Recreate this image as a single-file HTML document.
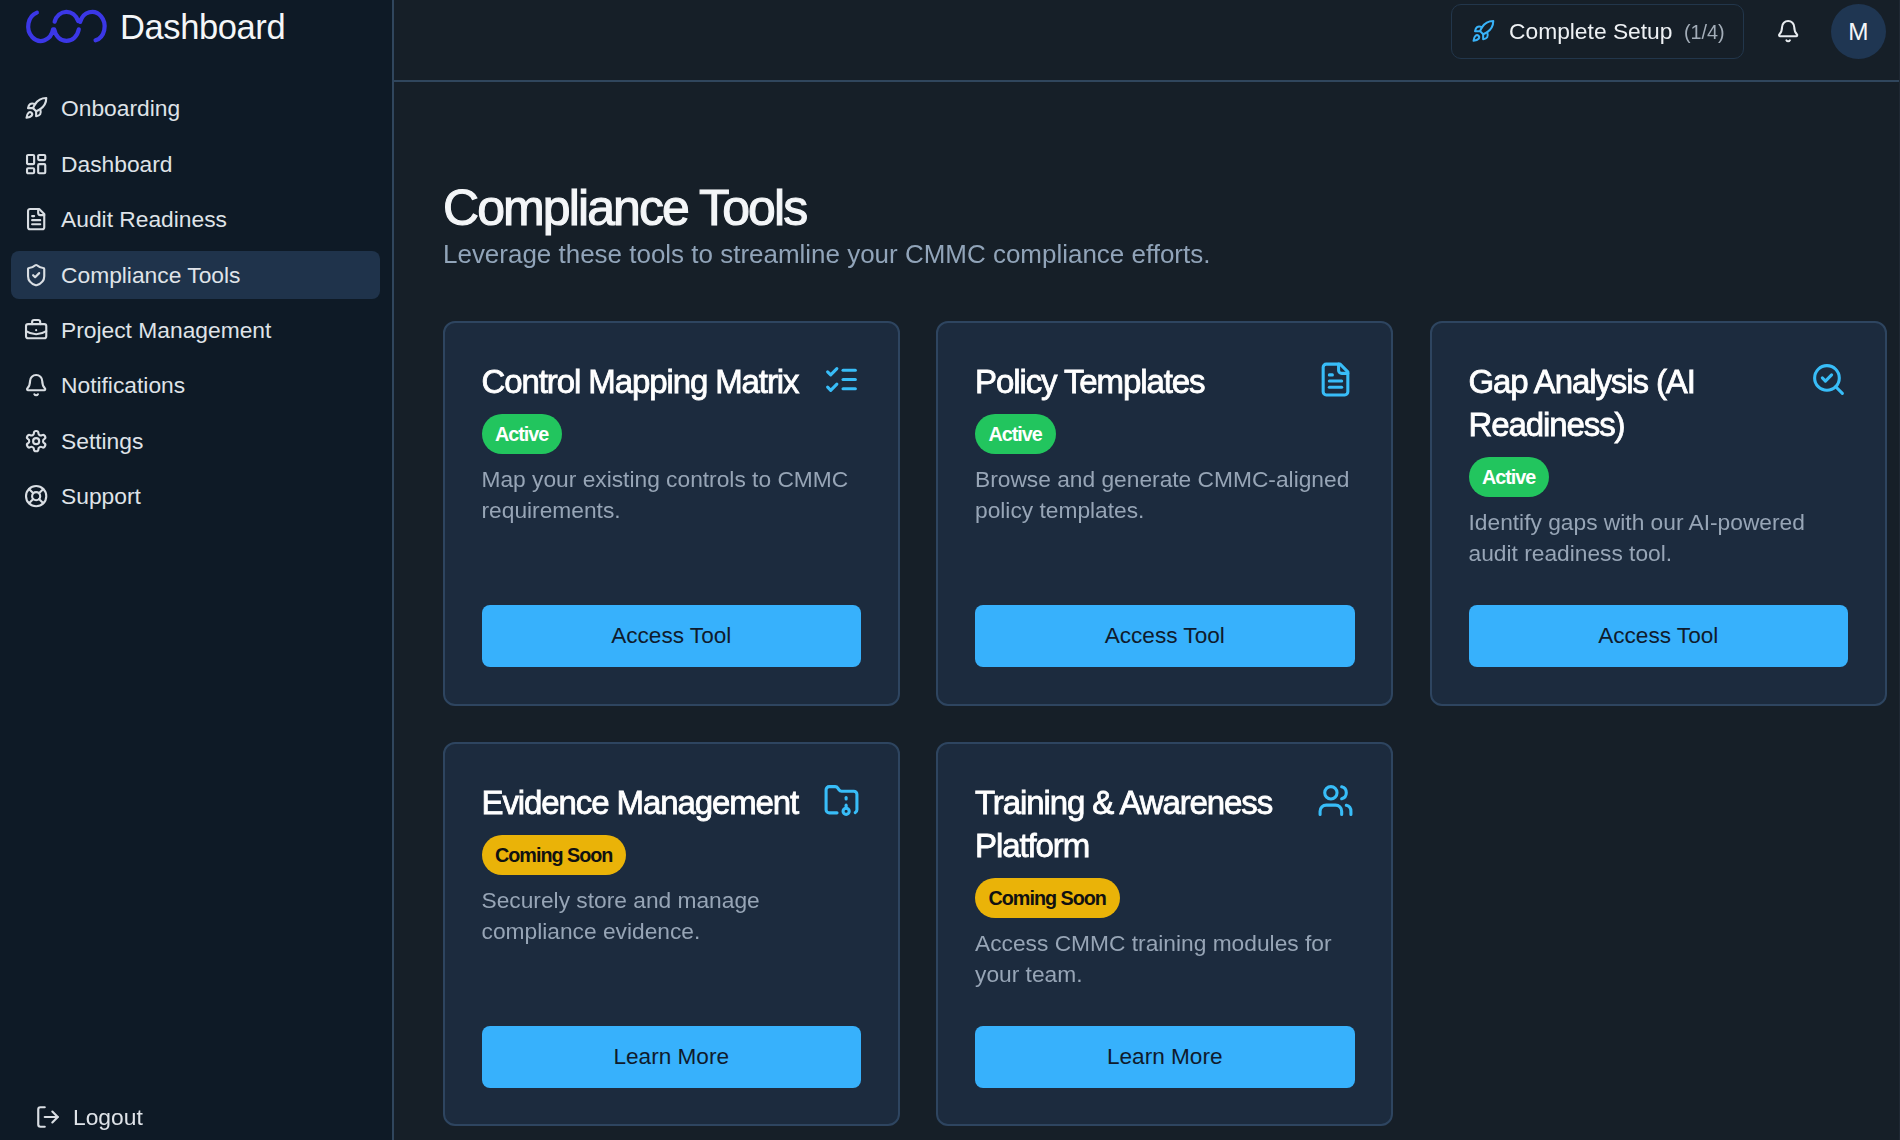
<!DOCTYPE html>
<html><head><meta charset="utf-8">
<style>
*{box-sizing:border-box;margin:0;padding:0}
html,body{width:1900px;height:1140px;overflow:hidden}
body{background:#161f28;font-family:"Liberation Sans",sans-serif;position:relative;color:#fff}
.abs{position:absolute}
#side{left:0;top:0;width:394px;height:1140px;background:#0e1a26;border-right:2px solid #30465d}
#hdr{left:394px;top:0;width:1506px;height:81.5px;border-bottom:2px solid #30465d;background:#161f28}
svg.ic{position:absolute;fill:none;stroke-linecap:round;stroke-linejoin:round}
.nav{position:absolute;left:11px;width:368.5px;height:48.7px;border-radius:8px}
.nav.act{background:#1f334b}
.nav span{position:absolute;left:50px;top:0;line-height:48.7px;font-size:22.8px;color:#dfe3e8;white-space:nowrap}
.nav svg{left:12.6px;top:12.2px;width:24.3px;height:24.3px;stroke:#d9dee3;stroke-width:2.1}
.card{position:absolute;width:457px;height:384.4px;background:#1c2b3e;border:2px solid #2e4560;border-radius:12px}
.card h3{position:absolute;left:37px;top:37px;width:330px;font-size:33px;line-height:43px;font-weight:normal;-webkit-text-stroke:0.8px #fff;letter-spacing:-1.1px;color:#fff}
.card .ico{position:absolute;right:37.2px;top:37.5px;width:37px;height:37px;stroke:#38bdf8;stroke-width:2}
.badge{position:absolute;left:37px;height:40.5px;border-radius:20.25px;font-size:19.76px;font-weight:bold;line-height:40.5px;padding:0 14px 0 13.5px;letter-spacing:-1px;white-space:nowrap}
.badge.g{background:#22c55e;color:#fff}
.badge.y{background:#eab308;color:#111}
.desc{position:absolute;left:37px;width:380px;font-size:22.75px;line-height:31px;color:#97a5b6}
.btn{position:absolute;left:37px;width:379.5px;height:61.5px;top:282px;background:#37b1fc;border-radius:8px;color:#0f1b2d;font-size:22.6px;line-height:61.5px;text-align:center}
</style></head>
<body><div id="wrap" style="position:absolute;left:0;top:0;width:1900px;height:1140px;filter:blur(0.5px)">
<div id="side" class="abs">
  <!-- logo -->
  <svg class="abs" style="left:0;top:0;width:120px;height:50px" viewBox="0 0 120 50" fill="none" stroke="#3b37e6" stroke-width="4.2" stroke-linecap="round">
    <path d="M36.87 12.61A12.55 14.5 0 1 0 53.03 29.41 M54.63 21.68A12.55 14.5 0 0 1 78.14 20.97 M78.78 29.41A12.55 14.5 0 0 1 54.22 29.41 M80.16 21.92A12.55 14.5 0 1 1 95.56 40.34"/>
  </svg>
  <div class="nav" style="top:84.3px"><svg class="ic" viewBox="0 0 24 24"><path d="M4.5 16.5c-1.5 1.26-2 5-2 5s3.74-.5 5-2c.71-.84.7-2.13-.09-2.91a2.18 2.18 0 0 0-2.91-.09z"/><path d="m12 15-3-3a22 22 0 0 1 2-3.95A12.88 12.88 0 0 1 22 2c0 2.720-.78 7.5-6 11a22.350 22.350 0 0 1-4 2z"/><path d="M9 12H4s.55-3.03 2-4c1.62-1.08 5 0 5 0"/><path d="M12 15v5s3.03-.55 4-2c1.08-1.62 0-5 0-5"/></svg><span>Onboarding</span></div>
  <div class="nav" style="top:139.7px"><svg class="ic" viewBox="0 0 24 24"><rect width="7" height="9" x="3" y="3" rx="1"/><rect width="7" height="5" x="14" y="3" rx="1"/><rect width="7" height="9" x="14" y="12" rx="1"/><rect width="7" height="5" x="3" y="16" rx="1"/></svg><span>Dashboard</span></div>
  <div class="nav" style="top:195.1px"><svg class="ic" viewBox="0 0 24 24"><path d="M15 2H6a2 2 0 0 0-2 2v16a2 2 0 0 0 2 2h12a2 2 0 0 0 2-2V7Z"/><path d="M14 2v4a2 2 0 0 0 2 2h4"/><path d="M10 9H8"/><path d="M16 13H8"/><path d="M16 17H8"/></svg><span>Audit Readiness</span></div>
  <div class="nav act" style="top:250.5px"><svg class="ic" viewBox="0 0 24 24"><path d="M20 13c0 5-3.5 7.5-7.66 8.95a1 1 0 0 1-.67-.01C7.5 20.5 4 18 4 13V6a1 1 0 0 1 1-1c2 0 4.5-1.2 6.240-2.720a1.170 1.170 0 0 1 1.520 0C14.510 3.810 17 5 19 5a1 1 0 0 1 1 1z"/><path d="m9 12 2 2 4-4"/></svg><span>Compliance Tools</span></div>
  <div class="nav" style="top:305.9px"><svg class="ic" viewBox="0 0 24 24"><path d="M12 12h.01"/><path d="M16 6V4a2 2 0 0 0-2-2h-4a2 2 0 0 0-2 2v2"/><path d="M22 13a18.150 18.150 0 0 1-20 0"/><rect width="20" height="14" x="2" y="6" rx="2"/></svg><span>Project Management</span></div>
  <div class="nav" style="top:361.3px"><svg class="ic" viewBox="0 0 24 24"><path d="M10.268 21a2 2 0 0 0 3.464 0"/><path d="M3.262 15.326A1 1 0 0 0 4 17h16a1 1 0 0 0 .74-1.673C19.410 13.956 18 12.499 18 8A6 6 0 0 0 6 8c0 4.499-1.411 5.956-2.738 7.326"/></svg><span>Notifications</span></div>
  <div class="nav" style="top:416.7px"><svg class="ic" viewBox="0 0 24 24"><path d="M12.22 2h-.44a2 2 0 0 0-2 2v.18a2 2 0 0 1-1 1.73l-.43.25a2 2 0 0 1-2 0l-.15-.08a2 2 0 0 0-2.73.73l-.22.38a2 2 0 0 0 .73 2.73l.15.1a2 2 0 0 1 1 1.72v.51a2 2 0 0 1-1 1.74l-.15.09a2 2 0 0 0-.73 2.73l.22.38a2 2 0 0 0 2.73.73l.15-.08a2 2 0 0 1 2 0l.43.25a2 2 0 0 1 1 1.73V20a2 2 0 0 0 2 2h.44a2 2 0 0 0 2-2v-.18a2 2 0 0 1 1-1.73l.43-.25a2 2 0 0 1 2 0l.15.08a2 2 0 0 0 2.73-.73l.22-.39a2 2 0 0 0-.73-2.73l-.15-.08a2 2 0 0 1-1-1.74v-.5a2 2 0 0 1 1-1.74l.15-.09a2 2 0 0 0 .73-2.73l-.22-.38a2 2 0 0 0-2.73-.73l-.15.08a2 2 0 0 1-2 0l-.43-.25a2 2 0 0 1-1-1.73V4a2 2 0 0 0-2-2z"/><circle cx="12" cy="12" r="3"/></svg><span>Settings</span></div>
  <div class="nav" style="top:472.1px"><svg class="ic" viewBox="0 0 24 24"><circle cx="12" cy="12" r="10"/><path d="m4.93 4.93 4.24 4.24"/><path d="m14.83 9.17 4.24-4.24"/><path d="m14.83 14.83 4.24 4.24"/><path d="m9.17 14.83-4.24 4.24"/><circle cx="12" cy="12" r="4"/></svg><span>Support</span></div>
  <svg class="ic" style="left:34.5px;top:1103.6px;width:26px;height:26px;stroke:#d9dee3;stroke-width:2" viewBox="0 0 24 24"><path d="M9 21H5a2 2 0 0 1-2-2V5a2 2 0 0 1 2-2h4"/><polyline points="16 17 21 12 16 7"/><line x1="21" x2="9" y1="12" y2="12"/></svg>
  <div class="abs" style="left:73px;top:1093px;line-height:48.7px;font-size:22.8px;color:#dfe3e8">Logout</div>
  <div class="abs" style="left:120px;top:5px;font-size:34.5px;line-height:44px;color:#f4f6f8;letter-spacing:-0.4px">Dashboard</div>
</div>
<div id="hdr" class="abs"></div>
<div class="abs" style="left:1451.3px;top:3.9px;width:292.9px;height:55.3px;border:1.52px solid #22364b;border-radius:10px"></div>
<svg class="ic" style="left:1471px;top:19.4px;width:24.3px;height:24.3px;stroke:#38b2f8;stroke-width:2" viewBox="0 0 24 24"><path d="M4.5 16.5c-1.5 1.26-2 5-2 5s3.74-.5 5-2c.71-.84.7-2.13-.09-2.91a2.18 2.18 0 0 0-2.91-.09z"/><path d="m12 15-3-3a22 22 0 0 1 2-3.95A12.88 12.88 0 0 1 22 2c0 2.720-.78 7.5-6 11a22.350 22.350 0 0 1-4 2z"/><path d="M9 12H4s.55-3.03 2-4c1.62-1.08 5 0 5 0"/><path d="M12 15v5s3.03-.55 4-2c1.08-1.62 0-5 0-5"/></svg>
<div class="abs" style="left:1509px;top:7px;line-height:48px;font-size:22.8px;color:#eef1f4;white-space:nowrap">Complete Setup</div>
<div class="abs" style="left:1684px;top:8px;line-height:48px;font-size:19.8px;color:#a3adb8;white-space:nowrap">(1/4)</div>
<svg class="ic" style="left:1775.5px;top:19.4px;width:24.3px;height:24.3px;stroke:#e8ecf0;stroke-width:2" viewBox="0 0 24 24"><path d="M10.268 21a2 2 0 0 0 3.464 0"/><path d="M3.262 15.326A1 1 0 0 0 4 17h16a1 1 0 0 0 .74-1.673C19.410 13.956 18 12.499 18 8A6 6 0 0 0 6 8c0 4.499-1.411 5.956-2.738 7.326"/></svg>
<div class="abs" style="left:1830.8px;top:3.9px;width:55.3px;height:55.3px;border-radius:50%;background:#1f3652;color:#f4f6f8;font-size:24.3px;line-height:55.3px;text-align:center">M</div>
<div class="abs" style="left:443px;top:177.5px;font-size:50px;line-height:60px;-webkit-text-stroke:1.1px #f4f6f8;color:#f4f6f8;letter-spacing:-1.9px;white-space:nowrap">Compliance Tools</div>
<div class="abs" style="left:443px;top:238.25px;font-size:25.97px;line-height:32px;color:#91a4b9;white-space:nowrap">Leverage these tools to streamline your CMMC compliance efforts.</div>
<div class="card" style="left:442.5px;top:321.3px">
  <h3>Control Mapping Matrix</h3>
  <svg class="ico ic" viewBox="0 0 24 24"><path d="m3 17 2 2 4-4"/><path d="m3 7 2 2 4-4"/><path d="M13 6h8"/><path d="M13 12h8"/><path d="M13 18h8"/></svg>
  <div class="badge g" style="top:90.6px">Active</div>
  <div class="desc" style="top:140.5px">Map your existing controls to CMMC requirements.</div>
  <div class="btn">Access Tool</div>
</div>
<div class="card" style="left:936px;top:321.3px">
  <h3>Policy Templates</h3>
  <svg class="ico ic" viewBox="0 0 24 24"><path d="M15 2H6a2 2 0 0 0-2 2v16a2 2 0 0 0 2 2h12a2 2 0 0 0 2-2V7Z"/><path d="M14 2v4a2 2 0 0 0 2 2h4"/><path d="M10 9H8"/><path d="M16 13H8"/><path d="M16 17H8"/></svg>
  <div class="badge g" style="top:90.6px">Active</div>
  <div class="desc" style="top:140.5px">Browse and generate CMMC-aligned policy templates.</div>
  <div class="btn">Access Tool</div>
</div>
<div class="card" style="left:1429.5px;top:321.3px">
  <h3>Gap Analysis (AI Readiness)</h3>
  <svg class="ico ic" viewBox="0 0 24 24"><path d="m8 11 2 2 4-4"/><circle cx="11" cy="11" r="8"/><path d="m21 21-4.3-4.3"/></svg>
  <div class="badge g" style="top:133.6px">Active</div>
  <div class="desc" style="top:183.5px">Identify gaps with our AI-powered audit readiness tool.</div>
  <div class="btn">Access Tool</div>
</div>
<div class="card" style="left:442.5px;top:742.1px">
  <h3>Evidence Management</h3>
  <svg class="ico ic" viewBox="0 0 24 24"><circle cx="15" cy="19" r="2"/><path d="M20.9 19.8A2 2 0 0 0 22 18V8a2 2 0 0 0-2-2h-7.9a2 2 0 0 1-1.69-.9L9.6 3.9A2 2 0 0 0 7.93 3H4a2 2 0 0 0-2 2v13a2 2 0 0 0 2 2h5.1"/><path d="M15 11v-1"/><path d="M15 17v-2"/></svg>
  <div class="badge y" style="top:90.6px">Coming Soon</div>
  <div class="desc" style="top:140.5px">Securely store and manage compliance evidence.</div>
  <div class="btn">Learn More</div>
</div>
<div class="card" style="left:936px;top:742.1px">
  <h3>Training &amp; Awareness Platform</h3>
  <svg class="ico ic" viewBox="0 0 24 24"><path d="M16 21v-2a4 4 0 0 0-4-4H6a4 4 0 0 0-4 4v2"/><circle cx="9" cy="7" r="4"/><path d="M22 21v-2a4 4 0 0 0-3-3.87"/><path d="M16 3.13a4 4 0 0 1 0 7.75"/></svg>
  <div class="badge y" style="top:133.6px">Coming Soon</div>
  <div class="desc" style="top:183.5px">Access CMMC training modules for your team.</div>
  <div class="btn">Learn More</div>
</div>
<div class="abs" style="left:1899px;top:0;width:1px;height:1140px;background:#1f2833"></div>
</div></body></html>
